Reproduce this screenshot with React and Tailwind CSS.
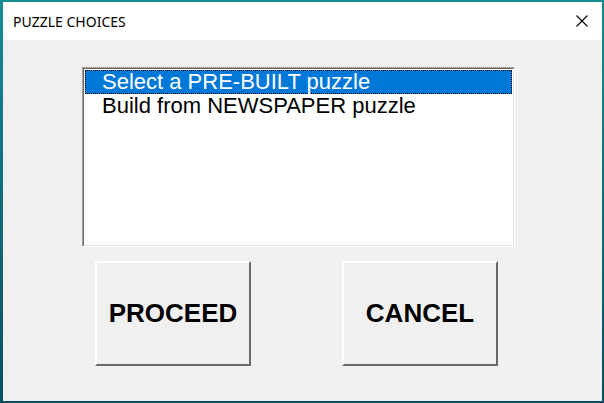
export default function App() {
  return (
    <div className="w-[604px] h-[403px] bg-gradient-to-b from-[#168c92] to-[#0c4d62] pt-[2px] pl-[3px] pr-[2px] pb-[2px] flex flex-col">
      <div className="flex-1 flex flex-col bg-[#f0f0f0]">
        <div className="h-[38px] bg-white flex items-center justify-between pl-[10px] pr-[14px]">
          <span className="text-[14px] text-black" style={{ fontFamily: '"Segoe UI", "Noto Sans", sans-serif' }}>PUZZLE CHOICES</span>
          <svg width="12" height="12" viewBox="0 0 12 12">
            <path d="M0.5 0.5 L11.5 11.5 M11.5 0.5 L0.5 11.5" stroke="#000" strokeWidth="1.1" fill="none" />
          </svg>
        </div>
        <div className="flex flex-col pl-[79px] pt-[27px]" style={{ fontFamily: '"Liberation Sans", Arial, sans-serif' }}>
          <div className="w-[433px] h-[180px] border border-t-[#a0a0a0] border-l-[#a0a0a0] border-r-white border-b-white">
            <div className="w-full h-full border border-t-[#696969] border-l-[#696969] border-r-[#e3e3e3] border-b-[#e3e3e3] bg-white pt-[1px] px-[1px]">
              <div className="h-[24px] bg-[#0078d7] border border-dotted border-black flex items-center pl-[16px] text-white text-[22px] leading-none">
                Select a PRE-BUILT puzzle
              </div>
              <div className="h-[24px] flex items-center pl-[17px] text-black text-[22px] leading-none">
                Build from NEWSPAPER puzzle
              </div>
            </div>
          </div>
          <div className="flex mt-[14px] pl-[13px] gap-[91px]">
            <div className="w-[156px] h-[105px] border-t-2 border-l-2 border-t-white border-l-white border-r-2 border-b-2 border-r-[#696969] border-b-[#696969] flex items-center justify-center text-[26px] font-bold text-black">
              PROCEED
            </div>
            <div className="w-[156px] h-[105px] border-t-2 border-l-2 border-t-white border-l-white border-r-2 border-b-2 border-r-[#696969] border-b-[#696969] flex items-center justify-center text-[26px] font-bold text-black">
              CANCEL
            </div>
          </div>
        </div>
      </div>
    </div>
  );
}
